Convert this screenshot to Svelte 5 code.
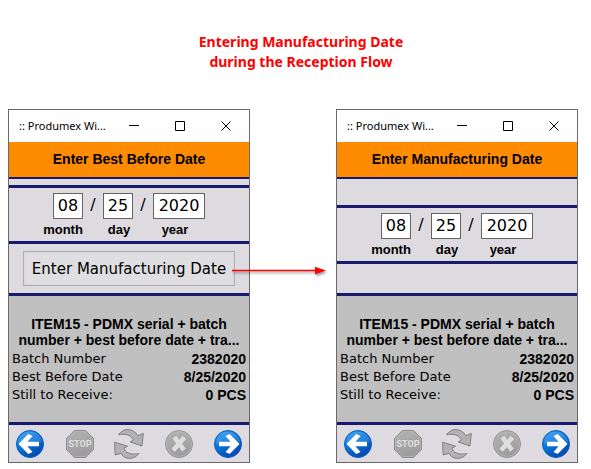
<script>
  let screens = [
    {
      id: 'best-before',
      heading: 'Enter Best Before Date',
      month: '08',
      day: '25',
      year: '2020',
      nextStep: 'Enter Manufacturing Date',
    },
    {
      id: 'manufacturing',
      heading: 'Enter Manufacturing Date',
      month: '08',
      day: '25',
      year: '2020',
      nextStep: '',
    },
  ]

  const item = 'ITEM15 - PDMX serial + batch number + best before date + tra...'

  const details = [
    { label: 'Batch Number', value: '2382020' },
    { label: 'Best Before Date', value: '8/25/2020' },
    { label: 'Still to Receive:', value: '0 PCS' },
  ]
</script>

<svg class="defs" width="0" height="0" aria-hidden="true">
  <defs>
    <linearGradient id="blue" x1="0" y1="0" x2="0.6" y2="1">
      <stop offset="0" stop-color="#2f9bf0" />
      <stop offset="0.45" stop-color="#0a78dd" />
      <stop offset="1" stop-color="#0448b0" />
    </linearGradient>
    <linearGradient id="grey" x1="0" y1="0" x2="0.3" y2="1">
      <stop offset="0" stop-color="#b4b4b4" />
      <stop offset="1" stop-color="#9c9c9c" />
    </linearGradient>
  </defs>
</svg>

<main>
  <h1>Entering Manufacturing Date<br />during the Reception Flow</h1>

  <div class="screens">
    {#each screens as screen (screen.id)}
      <section class="window">
        <header class="title-bar">
          <span class="title">:: Produmex Wi...</span>
          <button class="control" aria-label="Minimize">
            <svg width="11" height="11" viewBox="0 0 11 11"><path d="M0 4.5h10" /></svg>
          </button>
          <button class="control" aria-label="Maximize">
            <svg width="11" height="11" viewBox="0 0 11 11"><path d="M.5 .5h9v9h-9z" /></svg>
          </button>
          <button class="control" aria-label="Close">
            <svg width="11" height="11" viewBox="0 0 11 11"><path d="M.5 .5l9 9M9.5 .5l-9 9" /></svg>
          </button>
        </header>

        <h2>{screen.heading}</h2>
        <div class="spacer" class:tall={!screen.nextStep}></div>

        <div class="date">
          <div class="fields">
            <input id="{screen.id}-month" type="text" bind:value={screen.month} />
            <span>/</span>
            <input id="{screen.id}-day" type="text" bind:value={screen.day} />
            <span>/</span>
            <input id="{screen.id}-year" class="year" type="text" bind:value={screen.year} />
          </div>
          <div class="labels">
            <label for="{screen.id}-month">month</label>
            <label for="{screen.id}-day">day</label>
            <label for="{screen.id}-year">year</label>
          </div>
        </div>

        <div class="step">
          {#if screen.nextStep}
            <button class="btn-step">{screen.nextStep}</button>
            <svg class="arrow" width="100" height="20" viewBox="0 0 100 20" aria-hidden="true">
              <path d="M1 9.5h84" stroke="#f00" stroke-width="1.6" />
              <path d="M84 5.8l11 3.7-11 3.7z" fill="#f00" />
            </svg>
          {/if}
        </div>

        <div class="info">
          <p class="item">{item}</p>
          <dl>
            {#each details as row}
              <div class="row">
                <dt>{row.label}</dt>
                <dd>{row.value}</dd>
              </div>
            {/each}
          </dl>
        </div>

        <footer class="toolbar">
          <button aria-label="Back">
            <svg width="30" height="30" viewBox="0 0 30 30">
              <circle cx="15" cy="15" r="13.5" fill="url(#blue)" stroke="#0a5fc0" />
              <path d="M3 15a12 12 0 0 1 24-1C20 10 10 17 3 15z" fill="#fff" opacity=".14" />
              <path d="M3.5 15L13.2 5L17.6 7L12.4 12.8H24V17.2H12.4L17.6 23L13.2 25z" fill="#fff" />
            </svg>
          </button>
          <button aria-label="Stop">
            <svg width="30" height="30" viewBox="0 0 30 30">
              <path d="M9.4 1.5h11.2l7.9 7.9v11.2l-7.9 7.9H9.4l-7.9-7.9V9.4z" fill="url(#grey)" stroke="#8c8c8c" />
              <path d="M9.8 2.5h10.4l7.3 7.3v10.4l-7.3 7.3H9.8l-7.3-7.3V9.8z" fill="none" stroke="#b8b8b8" stroke-width=".7" />
              <text x="15" y="18" text-anchor="middle">STOP</text>
            </svg>
          </button>
          <button aria-label="Refresh">
            <svg width="30" height="30" viewBox="0 0 30 30">
              <g fill="#b2b2b2" stroke="#7e7e7e" stroke-linejoin="round">
                <path d="M4.5 5.8C7 2.2 10 .6 13.5 .6C18 .6 21.5 2.8 23.8 6.6L29.3 4.5L28 17L16.2 13L19.5 11C18.3 8.5 16.5 6.8 13.5 6C10.5 5.2 7.5 5 4.5 5.8z" />
                <path d="M24.8 24.6C22.5 27.8 19 29.4 15.5 29.4C11.5 29.4 8.5 27.5 7 24.2L1.2 26L.6 13.2L13.5 17.2L10 19.2C10.8 21.8 13 23.8 16 24.6C19 25.3 22 25.2 24.8 24.6z" />
              </g>
            </svg>
          </button>
          <button aria-label="Cancel">
            <svg width="30" height="30" viewBox="0 0 30 30">
              <circle cx="15" cy="15" r="13.5" fill="url(#grey)" stroke="#949494" />
              <circle cx="15" cy="15" r="12.3" fill="none" stroke="#bababa" stroke-width=".8" />
              <path d="M10.4 8.2l9.6 13M20.4 8.4l-11.2 12.8" stroke="#dedede" stroke-width="4.6" />
            </svg>
          </button>
          <button aria-label="Next">
            <svg width="30" height="30" viewBox="0 0 30 30">
              <circle cx="15" cy="15" r="13.5" fill="url(#blue)" stroke="#0a5fc0" />
              <path d="M3 15a12 12 0 0 1 24-1C20 10 10 17 3 15z" fill="#fff" opacity=".14" />
              <path d="M26.5 15L16.8 5L12.4 7L17.6 12.8H6V17.2H17.6L12.4 23L16.8 25z" fill="#fff" />
            </svg>
          </button>
        </footer>
      </section>
    {/each}
  </div>
</main>

<style>
  :global(body) {
    background: #fff;
  }

  .defs {
    position: absolute;
  }

  main {
    padding: 32px 13px 0 8px;
    color: #000;
    font-family: 'DejaVu Sans', Verdana, sans-serif;
  }

  h1 {
    margin: 0 0 37px;
    padding-left: 16px;
    color: #f00;
    font: bold 14px/20px 'Noto Sans', 'Segoe UI', sans-serif;
    text-align: center;
  }

  button {
    margin: 0;
    padding: 0;
    border: none;
    background: none;
    color: inherit;
    font-family: inherit;
  }

  .screens {
    display: grid;
    grid-template-columns: 1fr 1fr;
    gap: 86px;
  }

  .window {
    min-width: 0;
    border: 1px solid #696969;
    background: #dddbe0;
  }

  .title-bar {
    display: flex;
    height: 32px;
    background: #fff;
  }

  .title {
    flex: 1;
    min-width: 0;
    padding-left: 10px;
    font: 11px/32px 'Noto Sans', 'Segoe UI', sans-serif;
    white-space: nowrap;
  }

  .control {
    display: flex;
    flex: none;
    align-items: center;
    justify-content: center;
    width: 46px;
  }

  .control svg {
    fill: none;
    stroke: #000;
  }

  h2 {
    margin: 0;
    border-bottom: 2px solid #191970;
    background: #ff8c00;
    font: bold 14px/35px 'Liberation Sans', Arial, sans-serif;
    text-align: center;
  }

  .spacer {
    height: 6px;
  }

  .spacer.tall {
    height: 26px;
  }

  .date {
    padding-top: 5px;
    border: solid #191970;
    border-width: 3px 0;
  }

  .fields {
    display: flex;
    justify-content: center;
  }

  .fields input {
    box-sizing: border-box;
    width: 30px;
    height: 26px;
    padding: 0 0 2px;
    border: 1px solid #646464;
    background: #fff;
    color: #000;
    font-family: inherit;
    font-size: 16px;
    text-align: center;
  }

  .fields .year {
    width: 52px;
  }

  .fields span {
    width: 20px;
    font-size: 16px;
    line-height: 24px;
    text-align: center;
  }

  .labels {
    display: grid;
    grid-template-columns: repeat(3, 56px);
    justify-content: center;
    padding-right: 20px;
    font: bold 13px/22px 'Liberation Sans', Arial, sans-serif;
    text-align: center;
  }

  .step {
    position: relative;
    padding: 7px 14px;
  }

  /* the empty step is shorter on the screen with the tall spacer */
  .spacer.tall ~ .step {
    height: 15px;
  }

  .btn-step {
    display: block;
    width: 100%;
    height: 35px;
    border: 1px solid #adadad;
    background: #dfdee0;
    box-shadow: inset 0 0 0 2px #dddbe0;
    font-size: 15px;
    white-space: nowrap;
  }

  .arrow {
    position: absolute;
    top: 17px;
    left: calc(100% - 18px);
    filter: drop-shadow(1px 2px 1px rgba(0, 0, 0, 0.4));
  }

  .info {
    padding: 20px 3px 18px;
    border: solid #191970;
    border-width: 3px 0;
    background: #c0c0c0;
  }

  .item {
    margin: 0 0 2px;
    font: bold 14px/16px 'Liberation Sans', Arial, sans-serif;
    text-align: center;
  }

  dl {
    margin: 0;
  }

  .row {
    display: flex;
    justify-content: space-between;
    line-height: 18px;
  }

  dt {
    font-size: 13px;
  }

  dd {
    margin: 0;
    font-family: 'Liberation Sans', Arial, sans-serif;
    font-size: 14px;
    font-weight: bold;
  }

  .toolbar {
    display: flex;
    align-items: center;
    justify-content: space-between;
    height: 37px;
    padding: 0 6px;
  }

  .toolbar svg {
    display: block;
  }

  .toolbar text {
    fill: #dedede;
    font: bold 9px Roboto, 'Liberation Sans', sans-serif;
  }
</style>
